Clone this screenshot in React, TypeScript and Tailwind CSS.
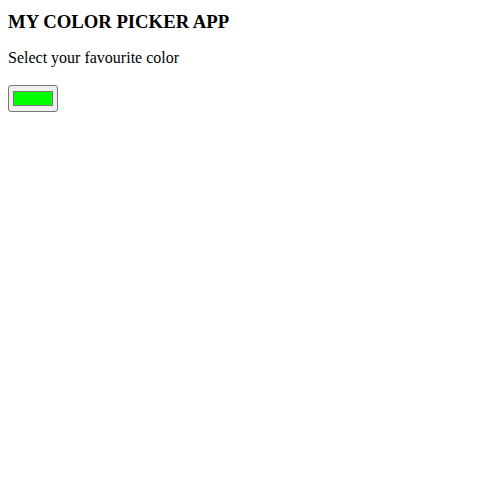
import React from "react";

export default function App() {
  return (
    <div className="min-h-[493px] bg-white p-2 font-['Liberation_Serif',serif] text-black">
      <h3 className="mb-[10px] text-[18.72px] font-bold leading-normal">MY COLOR PICKER APP</h3>
      <p className="mb-[15px] text-base leading-normal">Select your favourite color</p>
      <div className="flex h-[27px] w-[50px] rounded-[3px] border border-[#767676] bg-[#efefef] px-[4px] pt-[5px] pb-[5px]">
        <div className="h-[15px] w-[40px] border border-[#777777] bg-[#00ff00]" />
      </div>
    </div>
  );
}
